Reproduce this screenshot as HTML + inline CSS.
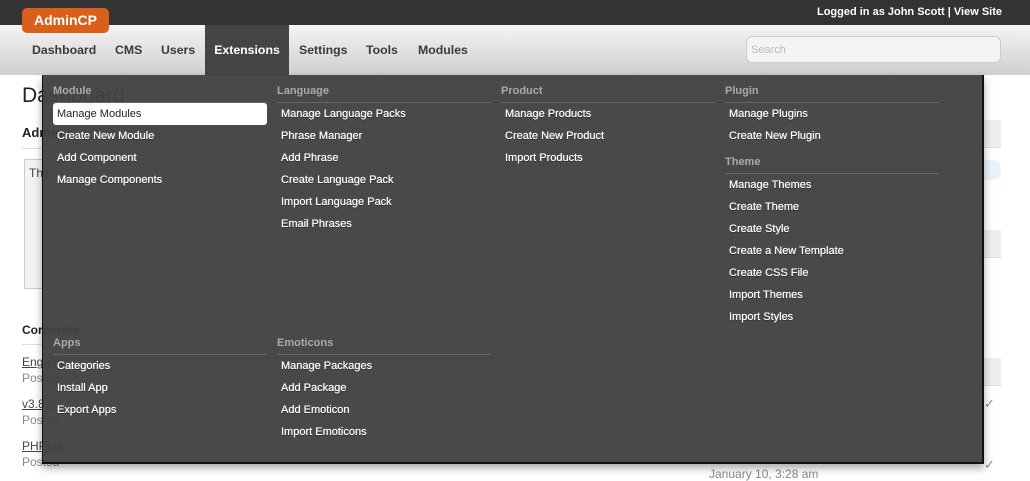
<!DOCTYPE html>
<html><head><style>
*{margin:0;padding:0;box-sizing:border-box}
body{width:1030px;height:479px;overflow:hidden;background:#fff;font-family:"Liberation Sans",Arial,sans-serif;position:relative}
.abs{position:absolute}
#top{left:0;top:0;width:1030px;height:25px;background:#333}
#logo{left:22px;top:8px;width:87px;height:25px;background:#d9601a;border-radius:5px;color:#fff;font-weight:bold;font-size:14px;line-height:25px;text-align:center;z-index:3}
#login{right:28px;top:6px;color:#fff;font-size:11px;font-weight:bold}
#nav{left:0;top:25px;width:1030px;height:50px;background:linear-gradient(#f4f4f4,#cfcfcf)}
.ni{top:43px;font-size:12.3px;font-weight:bold;color:#3a3a3a}
#ext{left:205px;top:25px;width:84px;height:51px;background:#444;color:#fff;font-size:12.3px;font-weight:bold;text-align:center;line-height:50px;z-index:3}
#search{left:746px;top:36px;width:255px;height:27px;border:1px solid #ccc;border-radius:6px;background:#f4f4f4;color:#bbb;font-size:11px;padding:7px 4px}
.bg{color:#444;font-size:12px}
#dd{left:42px;top:75px;width:942px;height:389px;background:rgba(66,66,66,0.96);border-left:1px solid #111;border-right:2px solid #111;border-bottom:2px solid #111;box-shadow:0 4px 8px rgba(0,0,0,.35);z-index:2}
.col{position:absolute;width:214px}
.h{color:#aaa;font-size:11px;font-weight:bold;height:28px;padding-top:10px;border-bottom:1px solid #666}
.it{color:#fff;font-size:11px;height:22px;line-height:22px;padding-left:4px;text-shadow:0 0 0.6px #fff,0 1px 0 #222}
.sel{background:#fff;color:#222;border-radius:3px;text-shadow:none}
</style></head><body>
<div id="top" class="abs"></div>
<div id="logo" class="abs">AdminCP</div>
<div id="login" class="abs">Logged in as John Scott | View Site</div>
<div id="nav" class="abs"></div>
<div class="abs ni" style="left:32px">Dashboard</div>
<div class="abs ni" style="left:115px">CMS</div>
<div class="abs ni" style="left:161px">Users</div>
<div id="ext" class="abs">Extensions</div>
<div class="abs ni" style="left:299px">Settings</div>
<div class="abs ni" style="left:366px">Tools</div>
<div class="abs ni" style="left:418px">Modules</div>
<div id="search" class="abs">Search</div>

<div class="abs" style="left:22px;top:84px;font-size:21px;color:#222">Dashboard</div>
<div class="abs" style="left:22px;top:125px;font-size:13px;font-weight:bold;color:#222">Admin</div>
<div class="abs" style="left:22px;top:148px;width:20px;border-top:1px solid #ddd"></div>
<div class="abs" style="left:24px;top:159px;width:670px;height:130px;border:1px solid #ccc;background:#f3f3f3"></div>
<div class="abs bg" style="left:29px;top:166px">This</div>
<div class="abs" style="left:22px;top:323px;font-size:12px;font-weight:bold;color:#222">Corporate</div>
<div class="abs" style="left:22px;top:344px;width:20px;border-top:1px solid #ddd"></div>
<div class="abs bg" style="left:22px;top:355px;text-decoration:underline">Engage</div>
<div class="abs bg" style="left:22px;top:371px;color:#888">Posted</div>
<div class="abs bg" style="left:22px;top:397px;text-decoration:underline">v3.8.0</div>
<div class="abs bg" style="left:22px;top:413px;color:#888">Posted</div>
<div class="abs bg" style="left:22px;top:439px;text-decoration:underline">PHPfox</div>
<div class="abs bg" style="left:22px;top:455px;color:#888">Posted</div>
<div class="abs" style="left:697px;top:120px;width:304px;height:28px;background:#eee;border-bottom:1px solid #ddd"></div>
<div class="abs" style="left:697px;top:230px;width:304px;height:28px;background:#eee;border-bottom:1px solid #ddd"></div>
<div class="abs" style="left:697px;top:358px;width:304px;height:28px;background:#eee;border-bottom:1px solid #ddd"></div>
<div class="abs" style="left:980px;top:160px;width:21px;height:20px;background:#eaf2fb;border-radius:0 8px 8px 0"></div>
<div class="abs" style="left:984px;top:396px;color:#6a6;font-size:13px">✓</div>
<div class="abs" style="left:984px;top:457px;color:#6a6;font-size:13px">✓</div>
<div class="abs bg" style="left:709px;top:467px;color:#888">January 10, 3:28 am</div>

<div id="dd" class="abs">
 <div class="col" style="left:10px;top:0">
  <div class="h">Module</div>
  <div class="it sel">Manage Modules</div><div class="it">Create New Module</div><div class="it">Add Component</div><div class="it">Manage Components</div>
 </div>
 <div class="col" style="left:234px;top:0">
  <div class="h">Language</div>
  <div class="it">Manage Language Packs</div><div class="it">Phrase Manager</div><div class="it">Add Phrase</div><div class="it">Create Language Pack</div><div class="it">Import Language Pack</div><div class="it">Email Phrases</div>
 </div>
 <div class="col" style="left:458px;top:0">
  <div class="h">Product</div>
  <div class="it">Manage Products</div><div class="it">Create New Product</div><div class="it">Import Products</div>
 </div>
 <div class="col" style="left:682px;top:0">
  <div class="h">Plugin</div>
  <div class="it">Manage Plugins</div><div class="it">Create New Plugin</div>
  <div class="h" style="height:27px;padding-top:9px">Theme</div>
  <div class="it">Manage Themes</div><div class="it">Create Theme</div><div class="it">Create Style</div><div class="it">Create a New Template</div><div class="it">Create CSS File</div><div class="it">Import Themes</div><div class="it">Import Styles</div>
 </div>
 <div class="col" style="left:10px;top:252px">
  <div class="h">Apps</div>
  <div class="it">Categories</div><div class="it">Install App</div><div class="it">Export Apps</div>
 </div>
 <div class="col" style="left:234px;top:252px">
  <div class="h">Emoticons</div>
  <div class="it">Manage Packages</div><div class="it">Add Package</div><div class="it">Add Emoticon</div><div class="it">Import Emoticons</div>
 </div>
</div>
</body></html>
